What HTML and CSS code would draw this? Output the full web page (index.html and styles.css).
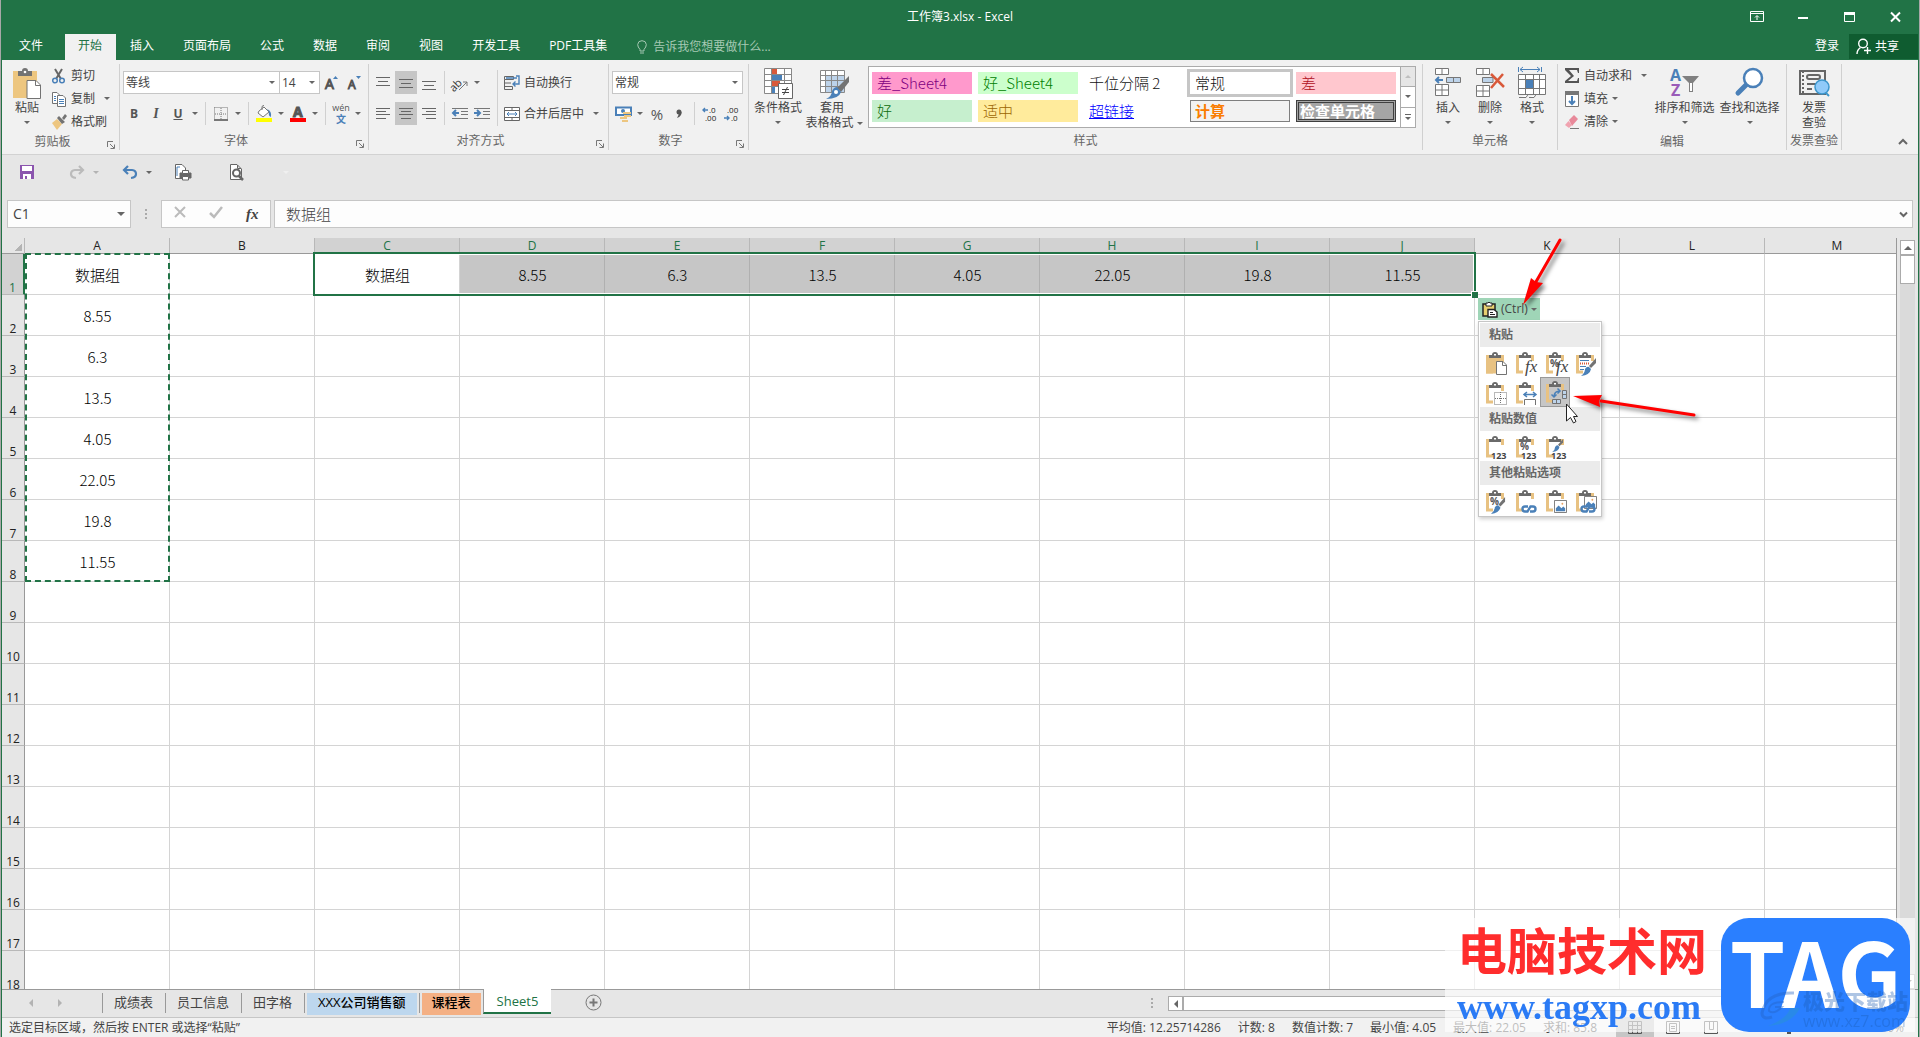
FILE: index.html
```html
<!DOCTYPE html>
<html lang="zh-CN">
<head>
    <meta charset="UTF-8">
    <meta name="viewport" content="width=device-width, initial-scale=1.0">
    <title>工作簿3.xlsx - Excel</title>
    <link rel="stylesheet" href="styles.css">
</head>
<body>
    <!-- shared shapes for the ribbon and the paste menu -->
    <svg class="sprite" aria-hidden="true">
        <symbol id="clip" viewBox="0 0 24 24">
            <path d="M4 4.500H1.500V20H7M14 4.500H16.500V9" fill="none" stroke="#e8c282" stroke-width="3"/>
            <path d="M3 6V3H6Q6 0 9 0T12 3H15V6Z" fill="#6a6a6a"/>
            <path d="M8 2H10V3.500H8Z" fill="#fff"/>
        </symbol>
        <symbol id="launch" viewBox="0 0 8 8">
            <path d="M.5 6V.5H6M3 3L7 7M7.500 3.500V7.500H3.500" fill="none" stroke="#777"/>
        </symbol>
        <symbol id="brush" viewBox="0 0 16 18">
            <path d="M15 0V5L10 10L8 8Z" fill="#737373"/>
            <path d="M8 9L10 11Q9 17 0 18Q4 15 4 11Q6 8 8 9Z" fill="#4a80b8"/>
        </symbol>
        <symbol id="link" viewBox="0 0 16 8">
            <path d="M7 1.500H4Q1.500 1.500 1.500 4T4 6.500H6.500L9.500 1.500H12Q14.500 1.500 14.500 4T12 6.500H9" fill="none" stroke="#4a80b8" stroke-width="2.400"/>
        </symbol>
        <symbol id="photo" viewBox="0 0 14 14">
            <path d="M.5.500H13.500V13.500H.5Z" fill="#fff" stroke="#737373"/>
            <path d="M2 12V9L5 6L8 9L10 7L12 9V12Z" fill="#4a80b8"/>
            <circle cx="9" cy="4" r="1" fill="#e8a060"/>
        </symbol>
    </svg>

    <div class="app">
        <header class="top">
            <div class="titlebar">
                <h1>工作簿3.xlsx - Excel</h1>
                <div class="window-buttons">
                    <button aria-label="功能区显示选项"><svg width="14" height="12" viewBox="0 0 14 12" fill="none" stroke="#fff"><path d="M.5.500H13.500V10.500H.5ZM.5 2.500H13.500M7 9V5M5 6.500L7 4.500L9 6.500"/></svg></button>
                    <button aria-label="最小化"><svg width="10" height="12"><path d="M0 6H10V8H0Z" fill="#fff"/></svg></button>
                    <button aria-label="最大化"><svg width="11" height="12"><path d="M.5 1.500H10.500V10.500H.5Z" fill="none" stroke="#fff"/><path d="M0 1H11V4H0Z" fill="#fff"/></svg></button>
                    <button aria-label="关闭"><svg width="11" height="12"><path d="M1 1.500L10 10.500M10 1.500L1 10.500" stroke="#fff" stroke-width="2"/></svg></button>
                </div>
            </div>
            <nav class="tabs">
                <a href="#" class="file">文件</a>
                <a href="#" class="active">开始</a>
                <a href="#">插入</a>
                <a href="#">页面布局</a>
                <a href="#">公式</a>
                <a href="#">数据</a>
                <a href="#">审阅</a>
                <a href="#">视图</a>
                <a href="#">开发工具</a>
                <a href="#">PDF工具集</a>
                <button class="tell-me"><svg width="10" height="14" fill="none" stroke="#a6c9b4"><path d="M3 9.500Q.7 7 .7 4.500Q1 .7 5 .7T9.300 4.500Q9.300 7 7 9.500V11H3ZM3 13H7"/></svg>告诉我您想要做什么...</button>
                <div class="account">
                    <a href="#" class="login">登录</a>
                    <button class="share"><svg width="15" height="17" fill="none" stroke="#fff" stroke-width="1.400"><circle cx="7" cy="5.500" r="4.300"/><path d="M1 16Q1 12 4.500 9.500M11.500 9V16M8 12.500H15"/></svg>共享</button>
                </div>
            </nav>
        </header>

        <section class="ribbon">
            <div class="group clipboard">
                <div class="group-body">
                    <button class="big"><svg width="30" height="32"><path d="M1 4H25V31H1Z" fill="#edc680"/><path d="M6 9V4H10Q10 1 13 1T16 4H20V9Z" fill="#737373"/><circle cx="13" cy="5" r="1.300" fill="#fff"/><path d="M15 13.500H24L28.500 18V31.500H15Z" fill="#fff" stroke="#737373"/><path d="M23.500 14V18.500H28" fill="none" stroke="#737373"/></svg><span>粘贴</span><i class="caret"></i></button>
                    <div class="stack">
                        <button class="small"><svg width="16" height="16" fill="none" stroke-width="2"><path d="M4 1L10 11M11 1L5 11" stroke="#666"/><g stroke="#4a80b8" stroke-width="1.500"><circle cx="4" cy="12.500" r="2.300"/><circle cx="11" cy="12.500" r="2.300"/></g></svg>剪切</button>
                        <button class="small"><svg width="16" height="16" fill="#fff" stroke="#737373"><path d="M1.500 1.500H6L8.500 4V12.500H1.500Z"/><path d="M6.500 4.500H12L14.500 7V15.500H6.500Z"/><path d="M3 5.500H5M3 7.500H5M3 9.500H5M8 8.500H13M8 10.500H13M8 12.500H13" stroke="#4a80b8"/></svg>复制<i class="caret"></i></button>
                        <button class="small"><svg width="16" height="16"><path d="M1 9L6 5L11 10L6 16Z" fill="#edc680"/><path d="M6 4L8 2L14 8L11 10ZM11 4L14 0L16 2L13 6Z" fill="#737373"/></svg>格式刷</button>
                    </div>
                </div>
                <div class="group-label launch">剪贴板<svg><use href="#launch"/></svg></div>
            </div>

            <div class="group font">
                <div class="group-body rows">
                    <div class="row">
                        <label class="combo font-name"><input type="text" value="等线" aria-label="字体"><i class="caret"></i></label>
                        <label class="combo font-size"><input type="text" value="14" aria-label="字号"><i class="caret"></i></label>
                        <button class="tool" aria-label="增大字号"><svg width="16" height="16"><text x="1" y="14" class="letter large">A</text><path d="M9 4L11.500 1L14 4Z" fill="#4a80b8"/></svg></button>
                        <button class="tool" aria-label="减小字号"><svg width="16" height="16"><text x="2" y="14" class="letter">A</text><path d="M10 1H15L12.500 4Z" fill="#4a80b8"/></svg></button>
                    </div>
                    <div class="row">
                        <button class="tool bold">B</button>
                        <button class="tool italic">I</button>
                        <button class="tool underline">U</button>
                        <button class="drop" aria-label="下划线"><i class="caret"></i></button>
                        <span class="sep"></span>
                        <button class="tool" aria-label="边框"><svg width="14" height="14" fill="none" stroke="#777"><path d="M.5.500H13.500V13M.5.500V13M7 1V13M1 7H13" stroke-dasharray="1 1"/><path d="M0 13H14" stroke-width="2"/></svg></button>
                        <button class="drop" aria-label="边框选项"><i class="caret"></i></button>
                        <span class="sep"></span>
                        <button class="tool" aria-label="填充颜色"><svg width="16" height="17"><path d="M3 6L8 2L13 7L7 12L2 8Z" fill="#fff" stroke="#777"/><path d="M6 5V2Q6 .5 8 .5" fill="none" stroke="#777"/><path d="M11 4Q16 6 15 12Q12 11 13 7Z" fill="#4a80b8"/><path d="M0 13H16V17H0Z" fill="#ff0"/></svg></button>
                        <button class="drop" aria-label="填充颜色选项"><i class="caret"></i></button>
                        <button class="tool" aria-label="字体颜色"><svg width="16" height="17"><text x="3" y="12" class="letter heavy">A</text><path d="M0 13H16V17H0Z" fill="#f00"/></svg></button>
                        <button class="drop" aria-label="字体颜色选项"><i class="caret"></i></button>
                        <span class="sep"></span>
                        <button class="tool pinyin" aria-label="拼音">wén<b>文</b></button>
                        <button class="drop" aria-label="拼音选项"><i class="caret"></i></button>
                    </div>
                </div>
                <div class="group-label launch">字体<svg><use href="#launch"/></svg></div>
            </div>

            <div class="group align">
                <div class="group-body">
                    <div class="rows">
                        <div class="row spaced">
                            <button class="tool" aria-label="顶端对齐"><svg width="14" height="16" stroke="#666"><path d="M0 2.500H14M2 6.500H12M0 10.500H14"/></svg></button>
                            <button class="tool on" aria-label="垂直居中"><svg width="14" height="16" stroke="#666"><path d="M0 4.500H14M2 8.500H12M0 12.500H14"/></svg></button>
                            <button class="tool" aria-label="底端对齐"><svg width="14" height="16" stroke="#666"><path d="M0 6.500H14M2 10.500H12M0 14.500H14"/></svg></button>
                            <span class="sep"></span>
                            <button class="tool" aria-label="方向"><svg width="17" height="16"><text x="-3" y="12" transform="rotate(-45 6 9)" class="ab">ab</text><path d="M7 15L15 7M11 7H15V11" fill="none" stroke="#777"/></svg></button>
                            <button class="drop" aria-label="方向选项"><i class="caret"></i></button>
                        </div>
                        <div class="row spaced">
                            <button class="tool" aria-label="左对齐"><svg width="14" height="14" stroke="#666"><path d="M0 1.500H14M0 4.500H10M0 7.500H14M0 11.500H10"/></svg></button>
                            <button class="tool on" aria-label="居中"><svg width="14" height="14" stroke="#666"><path d="M0 1.500H14M2 4.500H12M0 7.500H14M2 11.500H12"/></svg></button>
                            <button class="tool" aria-label="右对齐"><svg width="14" height="14" stroke="#666"><path d="M0 1.500H14M4 4.500H14M0 7.500H14M4 11.500H14"/></svg></button>
                            <span class="sep"></span>
                            <button class="tool" aria-label="减少缩进"><svg width="16" height="14" stroke="#777"><path d="M0 1.500H16M9 4.500H16M9 7.500H16M0 11.500H16"/><path d="M7 6H1M4 3L1 6L4 9" fill="none" stroke="#4a80b8" stroke-width="2"/></svg></button>
                            <button class="tool" aria-label="增加缩进"><svg width="16" height="14" stroke="#777"><path d="M0 1.500H16M9 4.500H16M9 7.500H16M0 11.500H16"/><path d="M0 6H6M3 3L6 6L3 9" fill="none" stroke="#4a80b8" stroke-width="2"/></svg></button>
                        </div>
                    </div>
                    <span class="sep tall"></span>
                    <div class="rows">
                        <div class="row"><button class="small"><svg width="16" height="16" fill="none" stroke="#666"><path d="M.5 1.500H9.500V4.500H.5ZM.5 4.500V14.500H8.500V11.500H.5M1 8H7"/><path d="M12 1H15V9H9M11.500 6.500L9 9L11.500 11.500M2 3H13" stroke="#4a80b8" stroke-width="1.400"/></svg>自动换行</button></div>
                        <div class="row"><button class="small"><svg width="16" height="16" fill="#fff" stroke="#666"><path d="M.5 1.500H15.500V14.500H.5ZM.5 4.500H15.500M.5 11.500H15.500M8 1.500V4M8 12V14"/><path d="M3 8H13M5 6L3 8L5 10M11 6L13 8L11 10" fill="none" stroke="#4a80b8"/></svg>合并后居中</button><button class="drop merge" aria-label="合并选项"><i class="caret"></i></button></div>
                    </div>
                </div>
                <div class="group-label launch">对齐方式<svg><use href="#launch"/></svg></div>
            </div>

            <div class="group number">
                <div class="group-body rows">
                    <div class="row">
                        <label class="combo number-format"><input type="text" value="常规" aria-label="数字格式"><i class="caret"></i></label>
                    </div>
                    <div class="row">
                        <button class="tool" aria-label="会计数字格式"><svg width="17" height="16"><path d="M1 1.500H16V9H1Z" fill="#fff" stroke="#4a80b8" stroke-width="2"/><circle cx="8" cy="5" r="2" fill="#4a80b8"/><path d="M8 7H16M9 10H16M5 12H12M7 15H13" stroke="#edc680" stroke-width="2"/></svg></button>
                        <button class="drop" aria-label="货币选项"><i class="caret"></i></button>
                        <button class="tool percent">%</button>
                        <button class="tool comma" aria-label="千位分隔样式"><svg width="6" height="9"><circle cx="3" cy="3" r="2.500" fill="#555"/><path d="M5.500 3Q6 7 1 9Q3 6 3 3" fill="#555"/></svg></button>
                        <span class="sep"></span>
                        <button class="tool" aria-label="增加小数位数"><svg width="16" height="14"><text x="7" y="6" class="dec">.0</text><text x="3" y="14" class="dec">.00</text><path d="M6 3H1M3 1L1 3L3 5" fill="none" stroke="#4a80b8" stroke-width="1.400"/></svg></button>
                        <button class="tool" aria-label="减少小数位数"><svg width="16" height="14"><text x="3" y="6" class="dec">.00</text><text x="7" y="14" class="dec">.0</text><path d="M0 11H5M3 9L5 11L3 13" fill="none" stroke="#4a80b8" stroke-width="1.400"/></svg></button>
                    </div>
                </div>
                <div class="group-label launch">数字<svg><use href="#launch"/></svg></div>
            </div>

            <div class="group styles">
                <div class="group-body">
                    <button class="big"><svg width="32" height="32"><path d="M2.500 1.500H29.500V26.500H2.500ZM2.500 7.500H29.500M2.500 13.500H29.500M2.500 19.500H29.500M9.500 1.500V26.500M22.500 1.500V26.500" fill="#fff" stroke="#888"/><path d="M10 2H15V7H10ZM10 14H18V19H10Z" fill="#d9593a"/><path d="M10 8H20V13H10ZM10 20H13V26H10Z" fill="#4a80b8"/><path d="M16.500 16.500H30.500V31.500H16.500Z" fill="#fff" stroke="#666"/><path d="M20 22.500H27M20 25.500H27M25.500 20L21.500 28" stroke="#444"/></svg><span>条件格式</span><i class="caret"></i></button>
                    <button class="big wide"><svg width="32" height="32"><path d="M2.500 3.500H26.500V25.500H2.500Z" fill="#fff"/><path d="M8 9H26V25H8Z" fill="#bdd3ea"/><path d="M2.500 3.500H26.500V25.500H2.500ZM2.500 8.500H26.500M2.500 13.500H26.500M2.500 19.500H26.500M7.500 3.500V25.500M13.500 3.500V25.500M19.500 3.500V25.500" fill="none" stroke="#888"/><path d="M31 9V15L23 25L19 21Z" fill="#737373"/><path d="M19 20L23 25Q21 32 8 32Q14 29 14 24Q16 20 19 20Z" fill="#4a80b8"/><circle cx="18" cy="25" r="2" fill="#fff"/></svg><span>套用</span><span class="second">表格格式<i class="caret"></i></span></button>
                    <div class="gallery">
                        <div class="style-list">
                            <button class="st bad4">差_Sheet4</button>
                            <button class="st good4">好_Sheet4</button>
                            <button class="st">千位分隔 2</button>
                            <button class="st chosen">常规</button>
                            <button class="st bad">差</button>
                            <button class="st good">好</button>
                            <button class="st neutral">适中</button>
                            <button class="st hyper">超链接</button>
                            <button class="st calc">计算</button>
                            <button class="st check">检查单元格</button>
                        </div>
                        <div class="gallery-scroll">
                            <button class="off" aria-label="上一行"><i class="caret up"></i></button>
                            <button aria-label="下一行"><i class="caret"></i></button>
                            <button class="more" aria-label="其他"><i class="caret"></i></button>
                        </div>
                    </div>
                </div>
                <div class="group-label">样式</div>
            </div>

            <div class="group cells">
                <div class="group-body">
                    <button class="big"><svg width="30" height="32" fill="#fff" stroke="#777"><path d="M2.500 1.500H15.500V7.500H2.500ZM9 1.500V7.500M2.500 17.500H15.500V28.500H2.500ZM9 17.500V28.500M2.500 23H15.500"/><path d="M13.500 10.500H27.500V15.500H13.500ZM20.500 10.500V15.500" fill="#bdd3ea"/><path d="M10 13H3M6 10L3 13L6 16" fill="none" stroke="#4a80b8" stroke-width="2"/></svg><span>插入</span><i class="caret"></i></button>
                    <button class="big"><svg width="30" height="32" fill="#fff" stroke="#777"><path d="M1.500 1.500H14.500V7.500H1.500ZM8 1.500V7.500M1.500 18.500H14.500V29.500H1.500ZM8 18.500V29.500M1.500 24H14.500"/><path d="M7.500 10.500H18V15.500H7.500Z" fill="#bdd3ea"/><path d="M16 7L29 20M28 7L16 21" fill="none" stroke="#d9593a" stroke-width="2.500"/></svg><span>删除</span><i class="caret"></i></button>
                    <button class="big"><svg width="30" height="32" fill="#fff" stroke="#777"><path d="M1.500 7.500H28.500V27.500H1.500ZM1.500 12.500H28.500M1.500 21.500H28.500M8.500 7.500V27.500M16.500 7.500V27.500M22.500 7.500V27.500M2 30.500H9L11 27.500M12 30.500H17L19 27.500"/><path d="M9 13H16V21H9Z" fill="#4a80b8" stroke="none"/><path d="M1.500 0V5M24.500 0V5M3 2.500H23M6 0L3 2.500L6 5M20 0L23 2.500L20 5" fill="none" stroke="#4a80b8"/></svg><span>格式</span><i class="caret"></i></button>
                </div>
                <div class="group-label">单元格</div>
            </div>

            <div class="group editing">
                <div class="group-body">
                    <div class="stack">
                        <button class="small sum"><svg width="16" height="16"><path d="M1 0H15V5H14L13 2H5L10 8L4 13H13L14 10H15V15H1V13L7 8L1 2Z" fill="#555"/></svg>自动求和<i class="caret"></i></button>
                        <button class="small"><svg width="16" height="16"><path d="M1.500.500H14.500V15.500H1.500Z" fill="#fff" stroke="#777"/><path d="M1 0H15V4H1Z" fill="#777"/><path d="M8 5V13M5 10L8 13L11 10" fill="none" stroke="#4a80b8" stroke-width="2"/></svg>填充<i class="caret"></i></button>
                        <button class="small"><svg width="16" height="16"><path d="M5 6L10 1L14 5L8 12Z" fill="#e8899a"/><path d="M4.500 7L8 11L5 14L1 11Z" fill="#f0a3b0"/><path d="M6 14.500H15" stroke="#777"/></svg>清除<i class="caret"></i></button>
                    </div>
                    <button class="big sort"><svg width="32" height="32"><text x="1" y="14" class="az a">A</text><text x="2" y="29" class="az z">Z</text><path d="M13 9H30L24 16V25H20V16Z" fill="#808080"/><path d="M21 16H23V24H21Z" fill="#fff"/></svg><span>排序和筛选</span><i class="caret"></i></button>
                    <button class="big sort"><svg width="32" height="32" fill="none" stroke="#4a80b8"><path d="M13 17L4 26" stroke-width="5" stroke-linecap="round"/><circle cx="19" cy="11" r="9" fill="#fff" stroke-width="2.500"/></svg><span>查找和选择</span><i class="caret"></i></button>
                </div>
                <div class="group-label">编辑</div>
            </div>

            <div class="group invoice">
                <div class="group-body">
                    <button class="big"><svg width="32" height="32" fill="none" stroke="#666" stroke-width="2"><path d="M2 4H27V27H2Z" fill="#f1f1f1"/><path d="M5 4V27M2 4V27" stroke-dasharray="2 2"/><rect x="9" y="8" width="13" height="4" rx="2"/><path d="M9 17H18M9 22H14"/><circle cx="24" cy="20" r="7" fill="#90caf9" stroke="#3c96cc" stroke-width="1.500"/><path d="M28 26L31 29" stroke="#3c96cc"/></svg><span>发票</span><span class="second">查验</span></button>
                </div>
                <div class="group-label">发票查验</div>
            </div>
            <button class="collapse" aria-label="折叠功能区"><svg width="10" height="8"><path d="M1 6L5 2L9 6" fill="none" stroke="#666" stroke-width="2"/></svg></button>
        </section>

        <div class="quick">
            <button aria-label="保存"><svg width="16" height="16"><path d="M1 1H15V15H1Z" fill="#8b55ae"/><path d="M3 2H13V7H3ZM4 10H12V15H4Z" fill="#fff"/><path d="M6 12H8V15H6Z" fill="#8b55ae"/></svg></button>
            <button class="redo" aria-label="重做"><svg width="16" height="16" fill="none" stroke="#bbb" stroke-width="2.200"><path d="M14 6H6Q2 6.500 2 10T7 14M10 2L14 6L10 10"/></svg><i class="caret"></i></button>
            <button class="undo" aria-label="撤消"><svg width="16" height="16" fill="none" stroke="#4a80b8" stroke-width="2.200"><path d="M2 6H10Q14 6.500 14 10T9 14M6 2L2 6L6 10"/></svg><i class="caret"></i></button>
            <button aria-label="快速打印"><svg width="17" height="17" fill="#fff" stroke="#666"><path d="M1.500.500H8L11.500 4V14.500H1.500Z"/><path d="M3 3V12M3 3H6" stroke="#4a80b8"/><path d="M6 9H17V14H6Z" fill="#666"/><path d="M8.500 6.500H14.500V9.500H8.500ZM8.500 12.500H14.500V16H8.500Z"/></svg></button>
            <button class="preview" aria-label="打印预览"><svg width="16" height="17" fill="#fff" stroke="#666"><path d="M1.500.500H8L12.500 5V15.500H1.500ZM8.500 1V4.500H12"/><circle cx="7.500" cy="9" r="3.500" stroke-width="2"/><path d="M10 12L14 16" stroke-width="2.500"/></svg></button>
            <button class="custom" aria-label="自定义快速访问工具栏"><i class="caret"></i></button>
        </div>

        <div class="formula-bar">
            <label class="name-box"><input type="text" value="C1" aria-label="名称框"><i class="caret large"></i></label>
            <span class="dots"></span>
            <div class="fx-buttons">
                <button aria-label="取消"><svg width="12" height="12"><path d="M1 1L11 11M11 1L1 11" stroke="#bbb" stroke-width="2"/></svg></button>
                <button aria-label="输入"><svg width="14" height="12" fill="none"><path d="M1 7L5 11L13 1" stroke="#bbb" stroke-width="2.500"/></svg></button>
                <button class="fx" aria-label="插入函数">fx</button>
            </div>
            <label class="formula"><input type="text" value="数据组" aria-label="编辑栏"><svg width="9" height="7"><path d="M1 1.500L4.500 5L8 1.500" fill="none" stroke="#666" stroke-width="2"/></svg></label>
        </div>

        <main class="sheet">
            <div class="grid">
                <table>
                    <thead id="heads"></thead>
                    <tbody id="rows"></tbody>
                </table>
                <div class="copied"></div>
                <div class="selection"></div>
                <div class="paste-options">
                    <button class="ctrl"><svg width="16" height="17"><path d="M1 3H13V15H1Z" fill="#e8d070" stroke="#222" stroke-width="1.500"/><path d="M4 5V2H6Q7 0 8 2H10V5Z" fill="#fff" stroke="#222"/><path d="M6 8.500H12L15 11V16H6Z" fill="#fff" stroke="#222" stroke-width="1.400"/><path d="M8 11.500H11M8 13.500H13" stroke="#222"/></svg>(Ctrl)<i class="caret"></i></button>
                    <div class="menu">
                        <h2>粘贴</h2>
                        <div class="icons">
                            <button aria-label="粘贴"><svg viewBox="0 0 24 24"><path d="M0 3H18V21.500H0Z" fill="#e8c282"/><use href="#clip" width="24" height="24"/><path d="M10.500 9.500H17L20.500 13V22.500H10.500Z" fill="#fff" stroke="#737373"/><path d="M16.500 10V13.500H20" fill="none" stroke="#737373"/></svg></button>
                            <button aria-label="公式"><svg viewBox="0 0 24 24"><use href="#clip" width="24" height="24"/><text x="9" y="20" class="fn">fx</text></svg></button>
                            <button aria-label="公式和数字格式"><svg viewBox="0 0 24 24"><use href="#clip" width="24" height="24"/><text x="4" y="15" class="pc">%</text><text x="10" y="20" class="fn">fx</text></svg></button>
                            <button aria-label="保留源格式"><svg viewBox="0 0 24 24"><use href="#clip" width="24" height="24"/><path d="M4 8.500H13M4 14.500H10M4 17.500H8" stroke="#4a80b8"/><path d="M4 11.500H13" stroke="#d9593a" stroke-width="2" stroke-dasharray="1 1"/><use href="#brush" x="5" y="6" width="16" height="18"/></svg></button>
                            <button aria-label="无边框"><svg viewBox="0 0 24 24"><use href="#clip" width="24" height="24"/><path d="M8.500 10.500H20.500V22.500H8.500ZM14.500 10V22M9 16.500H20" fill="#fff" stroke="#737373" stroke-dasharray="1 1"/></svg></button>
                            <button aria-label="保留源列宽"><svg viewBox="0 0 24 24"><use href="#clip" width="24" height="24"/><path d="M8.500 23V17.500H19.500V23" fill="#fff" stroke="#737373"/><path d="M8 12.500H20M11 10L8 12.500L11 15M17 10L20 12.500L17 15" fill="none" stroke="#4a80b8" stroke-width="1.500"/></svg></button>
                            <button class="on" aria-label="转置"><svg viewBox="0 0 24 24"><use href="#clip" width="24" height="24"/><path d="M16.500 9.500H20.500V17.500H16.500ZM16.500 13.500H20.500M6.500 18.500H14.500V22.500H6.500ZM10.500 18.500V22.500" fill="#bdd3ea" stroke="#737373"/><path d="M8 16Q8 10 14 10M5.500 13.500L8 16L10.500 13.500M11.500 7.500L14 10L11.500 12.500" fill="none" stroke="#4a80b8" stroke-width="1.500"/></svg></button>
                        </div>
                        <h2>粘贴数值</h2>
                        <div class="icons">
                            <button aria-label="值"><svg viewBox="0 0 24 24"><use href="#clip" width="24" height="24"/><text x="5" y="23" class="num">123</text></svg></button>
                            <button aria-label="值和数字格式"><svg viewBox="0 0 24 24"><use href="#clip" width="24" height="24"/><text x="4" y="14" class="pc">%</text><text x="5" y="23" class="num">123</text></svg></button>
                            <button aria-label="值和源格式"><svg viewBox="0 0 24 24"><use href="#clip" width="24" height="24"/><use href="#brush" x="6" y="3" width="12" height="13"/><text x="5" y="23" class="num">123</text></svg></button>
                        </div>
                        <h2>其他粘贴选项</h2>
                        <div class="icons">
                            <button aria-label="格式"><svg viewBox="0 0 24 24"><use href="#clip" width="24" height="24"/><text x="4" y="15" class="pc">%</text><use href="#brush" x="5" y="7" width="15" height="17"/></svg></button>
                            <button aria-label="粘贴链接"><svg viewBox="0 0 24 24"><use href="#clip" width="24" height="24"/><use href="#link" x="5" y="15" width="16" height="8"/></svg></button>
                            <button aria-label="图片"><svg viewBox="0 0 24 24"><use href="#clip" width="24" height="24"/><use href="#photo" x="8" y="10" width="13" height="13"/></svg></button>
                            <button aria-label="链接的图片"><svg viewBox="0 0 24 24"><use href="#clip" width="24" height="24"/><use href="#photo" x="8" y="6" width="13" height="13"/><use href="#link" x="4" y="15" width="16" height="8"/></svg></button>
                        </div>
                    </div>
                    <svg class="pointers" width="240" height="200">
                        <g class="red">
                            <path d="M94 2L67 49" stroke="#f00" stroke-width="3" stroke-linecap="round"/>
                            <path d="M57 67L65 40L70 44L77 45Z" fill="#f00"/>
                            <path d="M228 177L135 163" stroke="#f00" stroke-width="3" stroke-linecap="round"/>
                            <path d="M107 158L136 157L133 163L134 169Z" fill="#f00"/>
                        </g>
                        <path d="M100.500 166V183L104.500 179.500L107.500 185L110 183.500L107.500 178.500H111.500Z" fill="#fff" stroke="#222"/>
                    </svg>
                </div>
            </div>
            <div class="vscroll">
                <button aria-label="向上滚动"><i class="caret up large"></i></button>
                <div class="thumb"></div>
                <button class="end" aria-label="向下滚动"><i class="caret large"></i></button>
            </div>
        </main>

        <div class="sheet-tabs">
            <div class="nav-arrows"><button aria-label="上一张"><i class="caret left"></i></button><button aria-label="下一张"><i class="caret right"></i></button></div>
            <a href="#">成绩表</a>
            <a href="#">员工信息</a>
            <a href="#">田字格</a>
            <a href="#" class="blue"><span>XXX公司销售额</span></a>
            <a href="#" class="orange"><span>课程表</span></a>
            <a href="#" class="current">Sheet5</a>
            <button class="add" aria-label="新工作表"><svg width="17" height="17" fill="none" stroke="#777"><circle cx="8.500" cy="8.500" r="7.500"/><path d="M8.500 4.500V12.500M4.500 8.500H12.500" stroke-width="2"/></svg></button>
            <div class="hscroll">
                <span class="dots"></span>
                <button aria-label="向左滚动"><i class="caret left"></i></button>
                <div class="thumb"></div>
                <div class="track"></div>
                <button aria-label="向右滚动"><i class="caret right"></i></button>
            </div>
        </div>

        <footer class="status">
            <span class="message">选定目标区域，然后按 ENTER 或选择“粘贴”</span>
            <span>平均值: 12.25714286</span>
            <span>计数: 8</span>
            <span>数值计数: 7</span>
            <span>最小值: 4.05</span>
            <span>最大值: 22.05</span>
            <span>求和: 85.8</span>
            <div class="views">
                <button class="on" aria-label="普通"><svg width="14" height="13" fill="none" stroke="#555"><path d="M.5.500H13.500V12.500H.5ZM.5 4.500H13.500M.5 8.500H13.500M4.500.500V12.500M9.500.500V12.500"/></svg></button>
                <button aria-label="页面布局"><svg width="14" height="13" fill="none" stroke="#555"><path d="M.5.500H13.500V12.500H.5ZM3.500 2.500H10.500V10.500H3.500ZM5 5.500H9M5 7.500H9"/></svg></button>
                <button aria-label="分页预览"><svg width="14" height="13" fill="none" stroke="#555"><path d="M.5.500H13.500V12.500H.5ZM5.500 1V8.500H9.500V1"/></svg></button>
            </div>
            <div class="zoom"><button aria-label="缩小">−</button><input type="range" min="10" max="400" value="170" aria-label="缩放"><button aria-label="放大">+</button><span>80%</span></div>
        </footer>
    </div>

    <aside class="watermark">
        <div class="site">
            <strong>电脑技术网</strong>
            <span>www.tagxp.com</span>
        </div>
        <div class="logo">TAG
            <svg class="swirl" width="44" height="38" fill="none"><path d="M34 3Q6 2 2 23Q2 30 12 27" stroke="#2463c4" stroke-width="3"/><path d="M24 12Q8 12 9 21Q14 25 22 17H15" stroke="#2463c4" stroke-width="2"/><path d="M40 18Q32 34 8 36Q28 28 30 18Z" fill="#289ac8"/></svg>
            <div class="ghost"><b>极光下载站</b><small>www.xz7.com</small></div>
        </div>
    </aside>
    <script src="script.js"></script>
</body>
</html>
```

FILE: styles.css
```css
:root {
    --green: #217346;
    --ribbon: #f1f1f1;
    --chrome: #e6e6e6;
    --line: #c6c6c6;
    --text: #444;
    --blue: #4a80b8;
    --ui: "Open Sans", "Noto Sans CJK SC", sans-serif;
    --cell: "Noto Sans CJK SC", sans-serif;
}

* {
    margin: 0;
    padding: 0;
    box-sizing: border-box;
}

body {
    height: 100vh;
    overflow: hidden;
    background: #a8a8a8;
    color: var(--text);
    font: 12px/16px var(--ui);
}

button, input {
    border: 0;
    background: none;
    color: inherit;
    font: inherit;
}

a {
    color: inherit;
    text-decoration: none;
}

svg {
    flex: none;
    overflow: visible;
}

.sprite {
    position: absolute;
    width: 0;
    height: 0;
}

.app {
    display: flex;
    flex-direction: column;
    height: 100%;
    margin: 0 1px;
    border: solid var(--green);
    border-width: 0 1px;
    background: var(--chrome);
}

.caret {
    flex: none;
    width: 0;
    height: 0;
    border: 3px solid transparent;
    border-top-color: #666;
    border-bottom: 0;
}

.caret.large {
    border-width: 4px 4px 0;
}

.caret.up {
    transform: rotate(180deg);
}

.caret.left {
    border: 4px solid transparent;
    border-left: 0;
    border-right-color: #666;
}

.caret.right {
    border: 4px solid transparent;
    border-right: 0;
    border-left-color: #666;
}

/* title bar and tabs */
.top {
    background: var(--green);
    color: #fff;
}

.titlebar {
    display: grid;
    grid-template-columns: 1fr auto 1fr;
    align-items: center;
    height: 34px;
}

.titlebar h1 {
    grid-column: 2;
    font-size: 12px;
    font-weight: 400;
}

.window-buttons {
    display: flex;
    justify-content: flex-end;
}

.window-buttons button {
    display: grid;
    place-items: center;
    width: 46px;
    height: 32px;
}

.tabs {
    display: flex;
    height: 26px;
    line-height: 24px;
}

.tabs > a {
    padding: 0 15px 0 14px;
}

.tabs > .file {
    margin-left: 3px;
    margin-right: 7px;
}

.tabs > .active {
    padding: 0 14px 0 13px;
    background: var(--ribbon);
    color: var(--green);
}

.tell-me {
    display: flex;
    align-items: center;
    gap: 6px;
    margin-left: 15px;
    color: #a6c9b4;
}

.account {
    display: flex;
    margin-left: auto;
}

.login {
    padding: 0 10px;
}

.share {
    display: flex;
    align-items: center;
    gap: 4px;
    width: 69px;
    height: 25px;
    padding-left: 7px;
    background: #0f5c30;
}

/* ribbon */
.ribbon {
    display: flex;
    height: 95px;
    padding: 4px 0;
    border-bottom: 1px solid #d2d2d2;
    background: var(--ribbon);
}

.group {
    display: flex;
    flex: none;
    flex-direction: column;
    border-right: 1px solid #d0d0d0;
}

.group-body {
    display: flex;
    height: 71px;
    padding-left: 3px;
}

.group-label {
    position: relative;
    color: #666;
    line-height: 18px;
    text-align: center;
    white-space: nowrap;
}

.group-label.launch {
    padding-right: 16px;
}

.group-label svg {
    position: absolute;
    right: 4px;
    bottom: 2px;
    width: 8px;
    height: 8px;
}

.clipboard { width: 118px; }
.font { width: 249px; }
.align { width: 240px; }
.number { width: 140px; }
.styles { flex: 1 0 auto; }
.cells { width: 135px; }
.editing { width: 229px; }
.invoice { width: 55px; }

.big {
    display: flex;
    flex-direction: column;
    align-items: center;
    width: 42px;
    padding-top: 3px;
    white-space: nowrap;
}

.big svg {
    margin-bottom: 1px;
}

.big > .caret {
    margin-top: 5px;
}

.big .second {
    display: flex;
    align-items: center;
    gap: 3px;
    line-height: 14px;
}

.clipboard .big {
    width: 40px;
    margin-left: 2px;
}

.stack {
    padding-left: 2px;
}

.small {
    display: flex;
    align-items: center;
    gap: 4px;
    height: 23px;
    padding-left: 2px;
    white-space: nowrap;
}

.clipboard .small .caret {
    margin-left: 5px;
}

.rows {
    display: flex;
    flex-direction: column;
    gap: 8px;
    padding-top: 7px;
}

.row {
    display: flex;
    height: 23px;
}

.row.spaced > .tool:nth-child(-n+2) {
    margin-right: 1px;
}

.combo {
    display: flex;
    align-items: center;
    border: 1px solid var(--line);
    background: #fff;
}

.combo input {
    flex: 1;
    min-width: 0;
    padding-left: 2px;
    outline: 0;
}

.combo .caret {
    margin-right: 4px;
}

.font-name { width: 157px; }
.font-size { width: 40px; border-left: 0; margin-right: 1px; }
.number-format { width: 131px; }

.tool {
    display: grid;
    place-items: center;
    width: 22px;
    height: 23px;
    color: #555;
}

.tool.on {
    background: var(--line);
}

.drop {
    display: grid;
    place-items: center;
    width: 12px;
}

.drop.merge {
    margin-left: 6px;
}

.sep {
    width: 1px;
    margin: 0 4px;
    background: #d0d0d0;
}

.sep.tall {
    height: 56px;
    margin-top: 6px;
}

.bold {
    font-weight: 700;
}

.italic {
    font: italic 700 14px "Liberation Serif", serif;
}

.underline {
    font-weight: 700;
    text-decoration: underline;
}

.letter { font: 12px var(--ui); fill: #555; stroke: #555; }
.letter.large { font-size: 14px; }
.letter.heavy { font-weight: 700; font-size: 14px; }
.ab { font: 11px var(--ui); fill: #333; }
.dec { font: 8px var(--ui); fill: #222; }
.az { font: 700 16px var(--ui); }
.az.a { fill: var(--blue); }
.az.z { fill: #9a5cb8; }

.pinyin {
    font-size: 9px;
    line-height: 10px;
}

.pinyin b {
    color: var(--blue);
    font-size: 10px;
}

.percent {
    font-size: 15px;
}

.styles .big {
    width: 52px;
}

.styles .big.wide {
    width: 60px;
}

.styles .wide > span:not(.second) {
    padding-right: 4px;
}

.gallery {
    display: flex;
    height: 62px;
    margin: 2px 0 0 4px;
    border: 1px solid #ababab;
    background: #fff;
}

.style-list {
    display: grid;
    grid-template-columns: repeat(5, 100px);
    grid-auto-rows: 22px;
    gap: 6px;
    padding: 5px 3px;
}

.st {
    padding-left: 5px;
    color: #111;
    font: 300 15px/20px var(--cell);
    text-align: left;
}

.bad4 { background: #ff99cc; color: #800080; }
.good4 { background: #ccffcc; color: #008000; }
.bad { background: #ffc7ce; color: #b0101c; }
.good { background: #c6efce; color: #0b6b0b; }
.neutral { background: #ffeb9c; color: #9c6500; }
.hyper { color: #00f; text-decoration: underline; }

.chosen {
    outline: 3px solid var(--line);
}

.calc {
    padding-left: 4px;
    border: 1px solid #7f7f7f;
    background: #f2f2f2;
    color: #fa7d00;
    font-weight: 700;
    line-height: 18px;
}

.check {
    padding-left: 1px;
    border: 3px double #3f3f3f;
    background: #a5a5a5;
    color: #fff;
    font-weight: 700;
    line-height: 16px;
}

.gallery-scroll {
    display: flex;
    flex-direction: column;
    width: 15px;
    margin-left: 1px;
    border-left: 1px solid #ababab;
}

.gallery-scroll button {
    display: grid;
    flex: 1;
    place-items: center;
}

.gallery-scroll .off {
    background: var(--chrome);
}

.gallery-scroll .off .caret {
    opacity: .3;
}

.gallery-scroll button + button {
    border-top: 1px solid #ababab;
}

.gallery-scroll .more {
    align-content: center;
    gap: 2px;
}

.more::before {
    content: '';
    width: 6px;
    height: 1px;
    background: #666;
}

.cells .group-body {
    padding-left: 4px;
}

.editing .group-body {
    padding-left: 4px;
}

.editing .stack {
    width: 90px;
    padding-left: 0;
}

.editing .sum .caret {
    margin-left: 5px;
}

.sort {
    width: 65px;
}

.invoice .group-body {
    justify-content: center;
    padding-left: 0;
}

.collapse {
    align-self: flex-end;
    width: 76px;
    padding: 0 10px 0 0;
    text-align: right;
}

.collapse svg {
    display: inline-block;
}

/* quick access */
.quick {
    display: flex;
    align-items: center;
    height: 34px;
    padding-left: 17px;
}

.quick button {
    display: flex;
    align-items: center;
    gap: 8px;
    margin-right: 34px;
}

.quick .redo {
    margin-right: 23px;
}

.quick .redo .caret,
.quick .custom .caret {
    opacity: .4;
}

.quick .undo {
    margin-right: 22px;
}

.quick .preview {
    margin: 0 38px 0 4px;
}

.quick .custom .caret {
    border-top-color: #fff;
}

/* formula bar */
.formula-bar {
    display: flex;
    height: 38px;
    margin-top: 11px;
    padding: 0 5px 10px;
}

.name-box, .formula, .fx-buttons {
    display: flex;
    align-items: center;
    border: 1px solid var(--line);
    background: #fdfdfd;
}

.name-box {
    width: 124px;
    padding: 0 5px;
    font-size: 14px;
}

.name-box input, .formula input {
    flex: 1;
    min-width: 0;
    outline: 0;
}

.dots {
    width: 2px;
    height: 11px;
    background: repeating-linear-gradient(#aaa 0 2px, transparent 2px 4px);
}

.formula-bar .dots {
    margin: 9px 14px 0;
}

.fx-buttons {
    justify-content: space-around;
    width: 110px;
    margin-right: 3px;
}

.fx {
    font: italic 700 15px "Liberation Serif", serif;
}

.formula {
    flex: 1;
    padding: 0 4px 0 11px;
    font: 300 15px/20px var(--cell);
}

/* worksheet */
.sheet {
    display: flex;
    flex: 1;
    min-height: 0;
}

.grid {
    position: relative;
    flex: 1;
    overflow: hidden;
    border-right: 1px solid #999;
    background: #fff;
}

table {
    width: 1908px;
    border-spacing: 0;
    table-layout: fixed;
}

th {
    background: var(--chrome);
    color: #222;
    font: 12px/14px var(--ui);
}

thead th {
    height: 16px;
    border-right: 1px solid #b8b8b8;
    border-bottom: 1px solid #999;
}

thead th:first-child {
    width: 23px;
    background: linear-gradient(135deg, var(--chrome) 60%, #b4b4b4 60%) 11px 4px / 9px 9px no-repeat var(--chrome);
}

tbody th {
    height: 41px;
    border-right: 1px solid #999;
    border-bottom: 1px solid #b8b8b8;
    line-height: 12px;
    vertical-align: bottom;
}

th.picked {
    background: #d2d2d2;
    color: var(--green);
}

tbody th.picked {
    border-right: 2px solid var(--green);
}

td {
    padding: 2px 0 0 1px;
    border-right: 1px solid #d4d4d4;
    border-bottom: 1px solid #d4d4d4;
    color: #000;
    font: 300 15px/20px var(--cell);
    text-align: center;
}

td.picked {
    border-right-color: #b0b0b0;
    background: var(--line);
}

.copied {
    position: absolute;
    top: 15px;
    left: 23px;
    width: 145px;
    height: 329px;
    border: 2px dashed var(--green);
}

.selection {
    position: absolute;
    top: 14px;
    left: 311px;
    width: 1163px;
    height: 44px;
    border: 2px solid var(--green);
    box-shadow: inset 0 0 0 1px #fff;
}

.selection::after {
    content: '';
    position: absolute;
    right: -4px;
    bottom: -4px;
    width: 6px;
    height: 6px;
    border: solid #fff;
    border-width: 1px 0 0 1px;
    background: var(--green);
}

.paste-options {
    position: absolute;
    top: 60px;
    left: 1476px;
}

.ctrl {
    display: flex;
    align-items: center;
    gap: 3px;
    width: 62px;
    height: 22px;
    padding-left: 4px;
    background: #9fd5b7;
}

.menu {
    width: 124px;
    margin-top: 1px;
    padding: 1px;
    border: 1px solid var(--line);
    background: #fff;
    box-shadow: 1px 2px 4px rgba(0, 0, 0, .2);
}

.menu h2 {
    height: 24px;
    padding-left: 9px;
    background: #ebebeb;
    color: #666;
    font-size: 12px;
    font-weight: 700;
    line-height: 23px;
}

.icons {
    display: flex;
    flex-wrap: wrap;
}

.icons button {
    width: 30px;
    height: 30px;
    padding: 3px 0 0 6px;
}

.icons svg {
    display: block;
    width: 24px;
    height: 24px;
}

.icons .on {
    padding: 2px 0 0 5px;
    border: 1px solid #999;
    background: var(--line);
}

.fn { font: italic 17px "Liberation Serif", serif; fill: #444; }
.pc { font: 700 10px var(--ui); fill: #555; }
.num { font: 700 9px var(--ui); fill: #444; }

.pointers {
    position: absolute;
    top: -60px;
    left: -12px;
    pointer-events: none;
}

.red {
    filter: drop-shadow(3px 3px 2px rgba(0, 0, 0, .5));
}

.vscroll {
    display: flex;
    flex-direction: column;
    width: 15px;
    margin: 2px 3px 0;
    background: #dadada;
}

.vscroll button, .hscroll button {
    display: grid;
    place-items: center;
    width: 15px;
    height: 15px;
    border: 1px solid #ababab;
    background: #fff;
}

.vscroll .thumb {
    height: 29px;
    border: 1px solid #ababab;
    background: #fff;
}

.vscroll .end {
    margin-top: auto;
}

/* sheet tabs */
.sheet-tabs {
    display: flex;
    height: 28px;
    border-top: 1px solid #999;
    font-size: 13px;
}

.nav-arrows {
    display: flex;
    justify-content: space-around;
    width: 100px;
    padding: 0 28px 0 14px;
}

.nav-arrows button {
    padding-bottom: 2px;
    opacity: .4;
}

.nav-arrows .caret {
    display: block;
}

.sheet-tabs a {
    height: 20px;
    margin-top: 3px;
    padding: 0 12px 0 11px;
    border-left: 1px solid #999;
    line-height: 18px;
}

.sheet-tabs .blue, .sheet-tabs .orange {
    padding: 0 2px;
    color: #000;
    font-weight: 500;
}

.sheet-tabs a > span {
    display: block;
    height: 22px;
    padding: 0 11px;
    background: #bdd7ee;
}

.sheet-tabs .orange > span {
    padding: 0 10px;
    background: #f4b084;
}

.sheet-tabs .current {
    height: 25px;
    margin: -1px 0 0;
    padding: 3px 13px 0;
    border-bottom: 2px solid var(--green);
    background: #fff;
    color: var(--green);
}

.add {
    align-self: flex-start;
    margin: 4px 0 0 34px;
}

.hscroll {
    display: flex;
    align-items: flex-start;
    width: 747px;
    margin: 6px 20px 0 auto;
}

.hscroll .dots {
    margin: 2px 15px 0 0;
}

.hscroll .thumb {
    flex: 1;
    height: 15px;
    border: 1px solid #ababab;
    background: #fff;
}

.hscroll .track {
    width: 60px;
    height: 15px;
    background: #dadada;
}

/* status bar */
.status {
    display: flex;
    align-items: center;
    height: 20px;
    padding-left: 7px;
    border-top: 1px solid var(--line);
    background: var(--ribbon);
    white-space: nowrap;
}

.status > span {
    margin-right: 17px;
}

.status > .message {
    margin-right: auto;
}

.views {
    display: flex;
    margin-left: 2px;
}

.views button {
    display: grid;
    place-items: center;
    width: 38px;
    height: 19px;
}

.views .on {
    background: var(--line);
}

.zoom {
    display: flex;
    align-items: center;
    width: 188px;
    padding-left: 4px;
}

.zoom input {
    width: 112px;
    height: 2px;
    appearance: none;
    background: #aaa;
}

.zoom input::-webkit-slider-thumb {
    width: 4px;
    height: 12px;
    appearance: none;
    background: #555;
}

.zoom button {
    font-size: 16px;
}

.zoom span {
    margin-left: 16px;
}

/* site watermark over the bottom right corner */
.watermark {
    position: fixed;
    right: 5px;
    bottom: 5px;
    display: flex;
    width: 470px;
    height: 114px;
    background: rgba(255, 255, 255, .65);
}

.site {
    display: flex;
    flex-direction: column;
    flex: 1;
    padding-left: 12px;
}

.site strong {
    height: 70px;
    color: #ff2d2d;
    font: 700 50px/60px var(--cell);
}

.site span {
    color: #2b7bf5;
    font: 700 36px/38px "Liberation Serif", serif;
}

.logo {
    position: relative;
    width: 189px;
    height: 114px;
    margin-right: 5px;
    border-radius: 28px;
    background: #2a7fff;
    color: #fff;
    font: 700 89px/104px var(--cell);
    text-align: center;
}

.swirl {
    position: absolute;
    top: 72px;
    left: 39px;
    opacity: .4;
}

.ghost {
    position: absolute;
    top: 70px;
    left: 82px;
    color: #1a5cb4;
    opacity: .35;
    text-align: left;
    white-space: nowrap;
}

.ghost b {
    display: block;
    font-size: 21px;
    line-height: 24px;
}

.ghost small {
    display: block;
    font: 16px/18px var(--ui);
}
```

FILE: script.js
```javascript
const columns = 'ABCDEFGHIJKLM'.split('');
const values = ['数据组', '8.55', '6.3', '13.5', '4.05', '22.05', '19.8', '11.55'];
const rowCount = 18;

const isPicked = col => col >= 2 && col <= 9;

// values go down column A and, transposed, along row 1 from column C
function cellText(row, col) {
    if (col === 0) return values[row] || '';
    if (row === 0 && isPicked(col)) return values[col - 2];
    return '';
}

document.getElementById('heads').innerHTML = '<tr><th></th>' +
    columns.map((name, i) => `<th class="${isPicked(i) ? 'picked' : ''}">${name}</th>`).join('') + '</tr>';

let html = '';
for (let r = 0; r < rowCount; r++) {
    html += `<tr><th class="${r === 0 ? 'picked' : ''}">${r + 1}</th>`;
    columns.forEach((name, c) => {
        const picked = r === 0 && c > 2 && isPicked(c);
        html += `<td class="${picked ? 'picked' : ''}">${cellText(r, c)}</td>`;
    });
    html += '</tr>';
}
document.getElementById('rows').innerHTML = html;
```
